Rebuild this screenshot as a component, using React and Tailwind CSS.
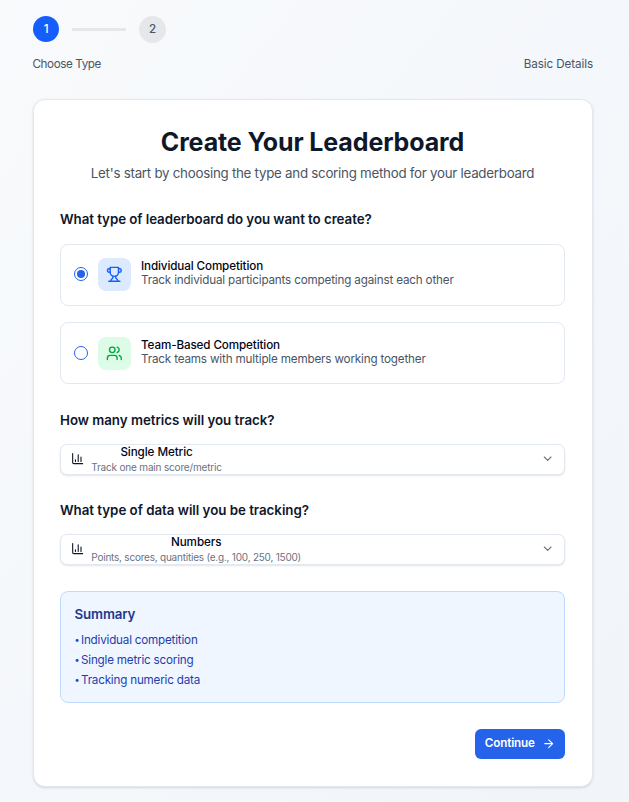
import { useState } from "react";
import { ArrowRight, ChartColumn, ChevronDown, Users } from "lucide-react";

const TrophyIcon = ({ className }) => (
  <svg
    viewBox="0 0 24 24"
    fill="none"
    stroke="currentColor"
    strokeWidth="2"
    strokeLinecap="round"
    strokeLinejoin="round"
    className={className}
  >
    <path d="M6 9H4.5a2.5 2.5 0 0 1 0-5H6" />
    <path d="M18 9h1.5a2.5 2.5 0 0 0 0-5H18" />
    <path d="M4 22h16" />
    <path d="M10 14.66V17c0 .55-.47.98-.97 1.21C7.85 18.75 7 20.24 7 22" />
    <path d="M14 14.66V17c0 .55.47.98.97 1.21C16.15 18.75 17 20.24 17 22" />
    <path d="M18 2H6v7a6 6 0 0 0 12 0V2Z" />
  </svg>
);

const competitionTypes = [
  {
    id: "individual",
    title: "Individual Competition",
    description: "Track individual participants competing against each other",
    icon: TrophyIcon,
    tile: "bg-[#dbeafe] text-[#155dfc]",
    padding: "pb-px",
    textClass: "pb-0.5",
  },
  {
    id: "team",
    title: "Team-Based Competition",
    description: "Track teams with multiple members working together",
    icon: Users,
    tile: "bg-[#dcfce7] text-green-600",
    padding: "pt-px",
    textClass: "pb-[3px]",
  },
];

const summary = ["Individual competition", "Single metric scoring", "Tracking numeric data"];

const SelectField = ({ label, title, description, descriptionClass }) => (
  <section>
    <h2 className="text-[13.33px] leading-5 font-semibold tracking-[-0.03px] text-slate-900">{label}</h2>
    <button className="mt-[14px] flex h-[31px] w-full items-center justify-between rounded-[7px] border border-slate-200 bg-white px-2.5 shadow-[0_1px_2px_rgba(15,23,42,0.12)]">
      <span className="flex items-center gap-[7px]">
        <ChartColumn className="size-[13.33px] text-slate-900" />
        <span className="text-center whitespace-nowrap">
          <span className="block text-[11.67px] leading-[16px] font-medium tracking-[-0.08px] text-slate-950">{title}</span>
          <span className={`block text-[10px] leading-[14px] text-gray-500 ${descriptionClass}`}>{description}</span>
        </span>
      </span>
      <ChevronDown className="size-[13.33px] text-gray-500" />
    </button>
  </section>
);

export default function App() {
  const [selected, setSelected] = useState("individual");

  return (
    <main className="h-[802px] overflow-hidden bg-gradient-to-br from-[#f8fafc] to-[#f1f5fa] pt-4 pr-9 pl-[33px] font-['Inter',sans-serif]">
      <header>
        <div className="flex h-[26.67px] items-center gap-[13px] text-[11.67px] font-medium">
          <div className="flex size-[26.3px] items-center justify-center rounded-full bg-[#155dfc] text-white">1</div>
          <div className="h-[3px] w-[54px] bg-gray-200" />
          <div className="flex size-[26.67px] items-center justify-center rounded-full bg-gray-200 text-gray-600">2</div>
        </div>
        <div className="mt-[13px] flex justify-between text-[11.67px] leading-[17px] text-gray-600">
          <span className="-ml-[0.5px] tracking-[-0.4px]">Choose Type</span>
          <span className="tracking-[-0.1px]">Basic Details</span>
        </div>
      </header>

      <section className="mt-[26px] h-[688px] rounded-xl border border-slate-200 bg-white pt-[27px] pr-[27px] pl-[26px] shadow-sm">
        <div className="text-center">
          <h1 className="text-[25px] leading-[30px] font-bold tracking-[-0.12px] text-slate-900">Create Your Leaderboard</h1>
          <p className="mt-[6px] text-[13.33px] leading-5 tracking-[-0.265px] text-gray-600">
            Let's start by choosing the type and scoring method for your leaderboard
          </p>
        </div>

        <h2 className="mt-[26px] text-[13.33px] leading-5 font-semibold tracking-[-0.06px] text-slate-900">
          What type of leaderboard do you want to create?
        </h2>
        <div className="mt-[15px] space-y-4">
          {competitionTypes.map((type) => {
            const Icon = type.icon;
            return (
              <div
                key={type.id}
                onClick={() => setSelected(type.id)}
                className={`flex h-[62px] items-center rounded-[8px] border border-slate-200 px-[13px] ${type.padding}`}
              >
                <div className="flex size-[14px] items-center justify-center rounded-full border border-[#2563eb]">
                  {selected === type.id ? <div className="size-2 rounded-full bg-[#2563eb]" /> : null}
                </div>
                <div className={`ml-2.5 flex size-[33px] items-center justify-center rounded-[8px] ${type.tile}`}>
                  <Icon className="size-[16.67px]" />
                </div>
                <div className={`ml-2.5 text-[11.67px] leading-[14px] ${type.textClass}`}>
                  <p className="font-medium tracking-[-0.12px] text-slate-950">{type.title}</p>
                  <p className="tracking-[-0.165px] text-gray-600">{type.description}</p>
                </div>
              </div>
            );
          })}
        </div>

        <div className="mt-[26px] space-y-[25px]">
          <SelectField
            label="How many metrics will you track?"
            title="Single Metric"
            description="Track one main score/metric"
            descriptionClass="tracking-[-0.18px]"
          />
          <SelectField
            label="What type of data will you be tracking?"
            title="Numbers"
            description="Points, scores, quantities (e.g., 100, 250, 1500)"
            descriptionClass="tracking-[-0.22px]"
          />
        </div>

        <section className="mt-[26px] h-[112px] rounded-[8px] border border-blue-200 bg-blue-50 px-[13.5px] pt-3">
          <h3 className="text-[13.33px] leading-5 font-semibold tracking-[-0.15px] text-blue-900">Summary</h3>
          <ul className="mt-[6px] text-[11.67px] leading-5 tracking-[-0.2px] text-[#1e40af]">
            {summary.map((item) => (
              <li key={item} className="flex">
                <span className="w-[6.5px] text-[9px]">•</span>
                {item}
              </li>
            ))}
          </ul>
        </section>

        <div className="mt-[26px] flex justify-end">
          <button className="flex h-[30px] w-[90px] items-center justify-center gap-[7px] rounded-[6px] bg-[#2563eb] pt-px text-[11.67px] font-semibold tracking-[-0.15px] text-white">
            Continue
            <ArrowRight className="size-[13.33px]" />
          </button>
        </div>
      </section>
    </main>
  );
}
